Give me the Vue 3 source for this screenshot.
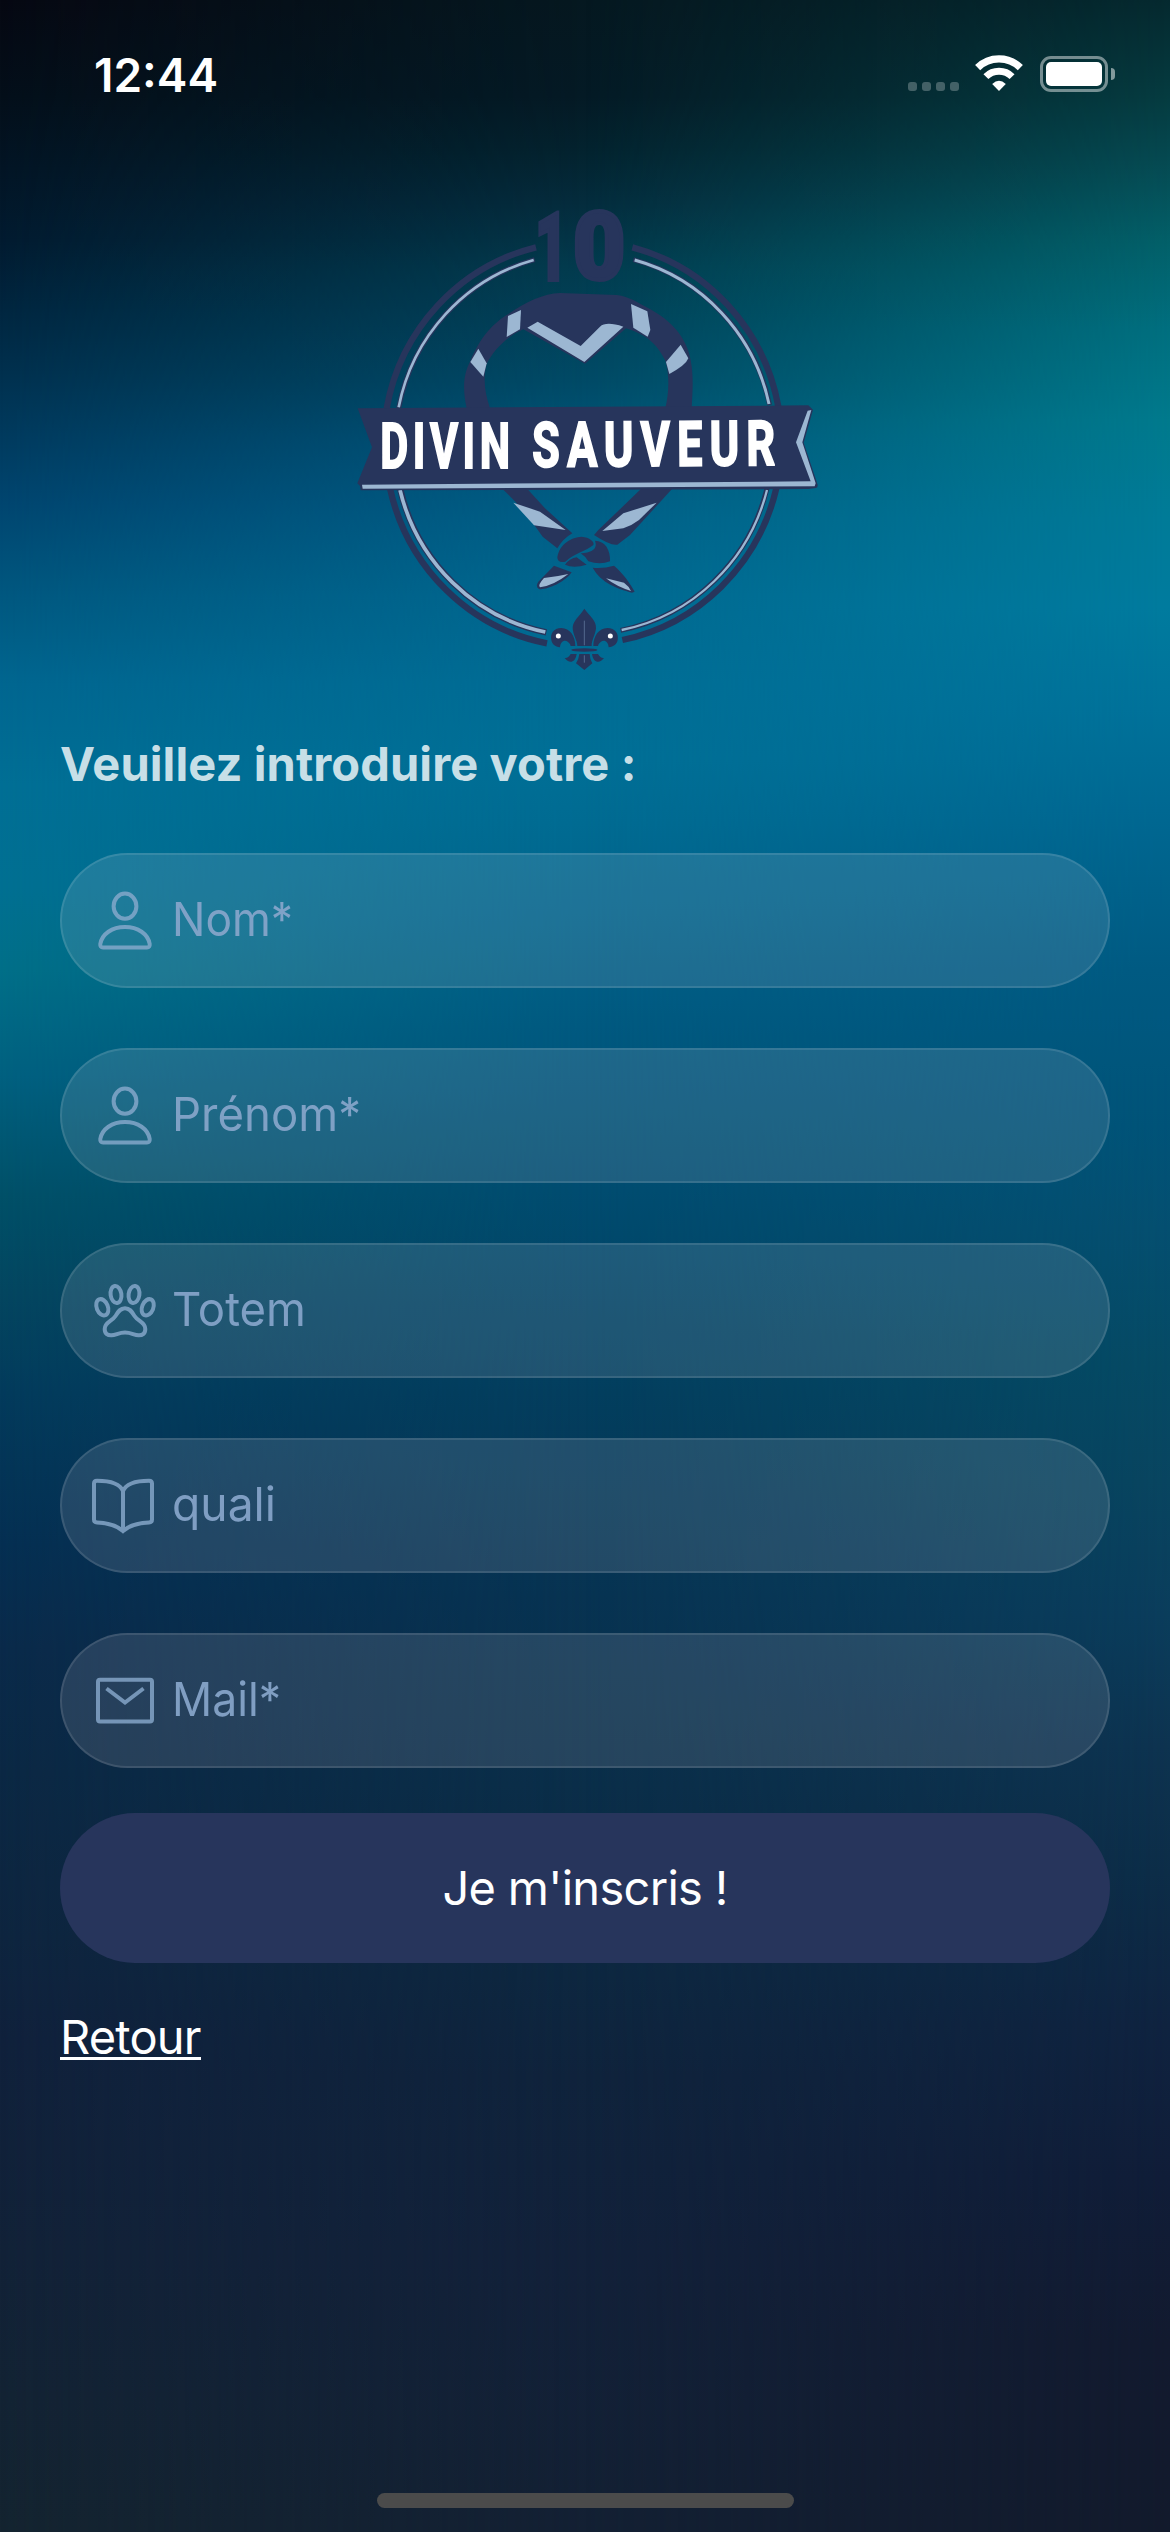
<script setup>
const fields = [
  { icon: 'person', label: 'Nom*', width: 121 },
  { icon: 'person', label: 'Prénom*', width: 189 },
  { icon: 'paw', label: 'Totem', width: 134 },
  { icon: 'book', label: 'quali', width: 104 },
  { icon: 'mail', label: 'Mail*', width: 109 },
]
</script>

<template>
  <main class="screen">
    <div class="tint tint-mid"></div>
    <div class="tint tint-right"></div>

    <header class="status">
      <span class="time">12:44</span>
      <div class="indicators">
        <div class="signal"><i></i><i></i><i></i><i></i></div>
        <svg class="wifi" viewBox="0 0 145 108">
          <g fill="none" stroke="#fff">
            <path d="M8 38A92 92 0 0 1 137 38" stroke-width="22" />
            <path d="M33 65A56 56 0 0 1 112 65" stroke-width="21" />
          </g>
          <path d="M72.500 108L52 87Q72.500 68 93 87Z" fill="#fff" />
        </svg>
        <div class="battery"><div class="charge"></div></div>
        <div class="nub"></div>
      </div>
    </header>

    <svg class="logo" viewBox="0 0 1470 1500">
      <g fill="none" stroke="#27355c" stroke-width="19">
        <path d="M588 172A600 609 0 0 0 140 655" />
        <path d="M877 172A600 609 0 0 1 1315 650" />
        <path d="M150 895A600 609 0 0 0 621 1360" />
        <path d="M1309 895A600 609 0 0 1 847 1350" />
      </g>
      <g fill="none" stroke="#27355c" stroke-width="15">
        <path d="M584 209A565 574 0 0 0 176 655" />
        <path d="M880 209A565 574 0 0 1 1289 645" />
        <path d="M180 895A565 574 0 0 0 619 1327" stroke-width="19" />
        <path d="M1281 895A565 574 0 0 1 842 1321" />
      </g>
      <g fill="none" stroke="#9cb7d2" stroke-width="8">
        <path d="M581 210A565 574 0 0 0 176 652" />
        <path d="M884 210A565 574 0 0 1 1287 642" stroke-width="9" />
        <path d="M180 900A565 574 0 0 0 616 1326" stroke-width="11" />
        <path d="M1281 900A565 574 0 0 1 845 1320" stroke-width="7" />
      </g>

      <g class="ten" fill="#27355c" stroke="#27355c" stroke-width="12">
        <text transform="translate(585 270) scale(.6 1)">1</text>
        <text transform="translate(699 268) scale(.96 1)">0</text>
      </g>

      <path fill="#27355c" d="M380 655C366 590 372 550 390 515C420 440 465 395 505 372C560 335 610 311 660 309L830 315C870 320 890 337 930 357C990 390 1040 440 1052 510C1061 560 1058 600 1055 655H976C986 610 990 560 976 512C950 460 920 435 858 415L735 521L550 418C500 440 460 480 440 522C428 570 435 610 450 655Z" />
      <g fill="#9cb7d2">
        <path d="M504 378L543 360L540 418L500 441Z" />
        <path d="M415 476L440 520L430 560L391 516Z" />
        <path d="M873 342L922 364L931 420L923 440L880 413Z" />
        <path d="M1022 464L1045 505Q1038 525 988 552L978 516Z" />
        <path d="M562 413L593 395L722 468L780 410Q798 393 850 410L733 516Z" />
      </g>

      <path fill="#27355c" d="M485 895H560L615 955L697 1030Q670 1045 652 1075L608 1040C580 1000 540 945 485 895Z" />
      <path fill="#27355c" d="M905 895H998L870 1035L832 1064Q812 1068 762 1035L775 1020Z" />
      <g fill="#9cb7d2">
        <path d="M520 938L600 965L677 1020L582 1006Z" />
        <path d="M950 938L850 970L787 1023L850 1015Q875 1007 897 990Z" />
      </g>

      <g fill="#27355c">
        <path d="M652 1102C658 1062 695 1041 725 1040C748 1042 765 1055 760 1065C740 1082 700 1092 676 1115Q652 1120 652 1102Z" />
        <path d="M765 1052C795 1052 812 1080 810 1114Q780 1126 745 1114Q735 1098 722 1090C750 1088 775 1080 765 1052Z" />
        <path d="M675 1124Q690 1104 710 1102L740 1124Q700 1136 675 1124Z" />
        <path d="M642 1127L695 1147C675 1178 615 1202 597 1197Q585 1190 595 1175Z" />
        <path d="M758 1133Q790 1136 822 1127C850 1150 870 1180 884 1205L876 1208C830 1195 785 1180 758 1133Z" />
      </g>
      <g fill="#9cb7d2">
        <path d="M612 1164Q650 1160 685 1152Q640 1187 600 1192Q592 1186 612 1164Z" />
        <path d="M798 1165L852 1178Q866 1188 873 1203Q830 1190 798 1165Z" />
      </g>

      <path fill="#27355c" d="M53 655L1405 646L1419 659L1391 758L1433 884Q1434 892 1428 894L1405 897L62 901L60 888L52 880L96 772Z" />
      <path fill="#9cb7d2" d="M66 884L620 880L1412 874L1368 757L1403 662L1414 660L1387 757L1427 880L1424 889L68 896Z" />
      <g class="banner-text" fill="#fff" stroke="#fff" stroke-width="6">
        <text transform="translate(121 834) scale(.69 1)" textLength="564">DIVIN</text>
        <text transform="translate(577 830) rotate(-.4) scale(.72 1)" textLength="1012">SAUVEUR</text>
      </g>

      <g fill="#27355c">
        <path d="M733 1256C750 1280 769 1290 768 1315C766 1335 755 1350 755 1368H712C712 1350 698 1335 698 1312C700 1290 718 1280 733 1256Z" />
        <path d="M706 1368C706 1338 690 1315 664 1314C640 1314 630 1332 634 1350C636 1362 645 1370 660 1372C661 1354 674 1347 684 1356Q692 1362 692 1368Z" />
        <path d="M760 1368C760 1338 776 1315 802 1314C826 1314 837 1332 833 1350C831 1362 821 1370 806 1372C805 1354 792 1347 782 1356Q774 1362 774 1368Z" />
        <ellipse cx="733" cy="1380" rx="39" ry="5" />
        <path d="M718 1392H749Q750 1410 757 1420L733 1440L708 1420Q716 1410 718 1392Z" />
        <path d="M710 1392C706 1420 686 1421 674 1404Q684 1406 692 1392Z" />
        <path d="M756 1392C760 1420 780 1421 792 1404Q782 1406 774 1392Z" />
      </g>
      <path d="M733 1292V1366M733 1396V1418" stroke="#5c7399" stroke-width="2.500" />
      <circle cx="655" cy="1338" r="7.500" fill="#fff" />
      <circle cx="811" cy="1338" r="7.500" fill="#fff" />
    </svg>

    <form class="form">
      <h1 class="title">Veuillez introduire votre :</h1>
      <div class="fields">
        <label v-for="field in fields" :key="field.label" class="field">
          <svg class="icon" viewBox="0 0 70 70">
            <template v-if="field.icon === 'person'">
              <ellipse cx="35" cy="20.200" rx="11.400" ry="12.600" />
              <path d="M10.300 58C12 48 22 41 35 41S58 48 59.700 58Q60 61.500 57 61.500H13Q10 61.500 10.300 58Z" />
            </template>
            <template v-else-if="field.icon === 'paw'">
              <ellipse cx="26" cy="18.500" rx="5.400" ry="8.600" transform="rotate(-8 26 18.500)" />
              <ellipse cx="44" cy="18.500" rx="5.400" ry="8.600" transform="rotate(8 44 18.500)" />
              <ellipse cx="12.300" cy="31.300" rx="5.600" ry="8.500" transform="rotate(-22 12.300 31.300)" />
              <ellipse cx="57.700" cy="31.300" rx="5.600" ry="8.500" transform="rotate(22 57.700 31.300)" />
              <path d="M35 32.200C40 32.200 42 36 44.500 40C48 45.500 55.300 46 55.300 53C55.300 58 52 59.500 48.500 59.300C44 59 41 56.500 35 56.500S26 59 21.500 59.300C18 59.500 14.700 58 14.700 53C14.700 46 22 45.500 25.500 40C28 36 30 32.200 35 32.200Z" />
            </template>
            <template v-else-if="field.icon === 'book'">
              <path d="M33 60C27 54.500 18 52 7 51.500Q4 51.300 4 48.500V12.500Q4 9.700 7 9.700C20 9.700 30 13 33 20C36 13 46 9.700 59 9.700Q62 9.700 62 12.500V48.500Q62 51.300 59 51.500C48 52 39 54.500 33 60ZM33 20V60" />
            </template>
            <template v-else>
              <rect x="8" y="13.800" width="54" height="41.700" rx="2" />
              <path d="M16.500 22.500L35 36.500L53.500 22.500" />
            </template>
          </svg>
          <svg class="placeholder" viewBox="0 0 300 70">
            <text x="0" y="50" :textLength="field.width" lengthAdjust="spacingAndGlyphs">{{ field.label }}</text>
          </svg>
        </label>
      </div>
      <button type="button" class="submit">Je m'inscris !</button>
      <a class="back">Retour</a>
    </form>

    <div class="home"></div>
  </main>
</template>

<style>
body {
  margin: 0;
  background: #132033;
}
</style>

<style scoped>
.screen {
  position: relative;
  box-sizing: border-box;
  display: flex;
  flex-direction: column;
  width: 1170px;
  height: 2532px;
  overflow: hidden;
  font-family: Inter, "Liberation Sans", sans-serif;
  color: #fff;
  background: linear-gradient(180deg, #060812 0%, #040f1a 3.8%, #021b30 9.5%, #00304e 14.7%, #00456f 19.8%, #005880 23.6%, #006690 27%, #006f95 31%, #007092 35%, #006f88 38.3%, #006080 42.5%, #005068 47.2%, #044660 51%, #033b5c 55%, #052f52 61%, #0a2a4a 65%, #0b2844 70%, #0e253f 76.5%, #10213c 80.5%, #122238 89%, #142430 100%);
}

.tint {
  position: absolute;
  inset: 0;
}

.tint-mid {
  background: linear-gradient(180deg, #051820 0%, #041a25 3.8%, #03232f 6%, #042c3d 8%, #023b4e 10.500%, #004a66 15%, #00567a 17.500%, #006088 20.500%, #006890 23.500%, #006d95 27%, #006f96 30%, #006b92 32.500%, #00628a 36.500%, #005980 40.500%, #004c70 47%, #033e5e 55%, #073352 63%, #0a2e49 70.500%, #0d2740 78%, #0f233c 82%, #12213a 89%, #132033 100%);
  -webkit-mask-image: linear-gradient(90deg, transparent, #000 50%);
  mask-image: linear-gradient(90deg, transparent, #000 50%);
}

.tint-right {
  background: linear-gradient(180deg, #05292f 0%, #053b40 3.8%, #054a52 6.400%, #026069 9.600%, #006f7f 13%, #007a8d 16.600%, #007b98 20.500%, #007b9e 24%, #00729a 28%, #006892 32%, #005a82 38.300%, #005378 44.500%, #044f70 48.500%, #054a64 54%, #084560 58.500%, #0a3d5c 63.800%, #0d3350 69%, #0c2d48 74%, #0f2340 80%, #101d38 86%, #121a2f 92.500%, #121a2c 100%);
  -webkit-mask-image: linear-gradient(90deg, transparent 50%, #000 100%);
  mask-image: linear-gradient(90deg, transparent 50%, #000 100%);
}

.status,
.logo,
.form,
.home {
  position: relative;
}

.status {
  box-sizing: border-box;
  display: flex;
  justify-content: space-between;
  align-items: flex-start;
  height: 190px;
  padding: 55px 55px 0 94px;
}

.time {
  font-size: 46px;
  font-weight: 600;
  line-height: 40px;
}

.indicators {
  display: flex;
  align-items: flex-start;
}

.signal {
  display: flex;
  gap: 5px;
  margin: 27px 16px 0 0;
}

.signal i {
  width: 9px;
  height: 9px;
  border-radius: 3px;
  background: rgba(255, 255, 255, 0.25);
}

.wifi {
  width: 48px;
  height: 36px;
  margin-right: 17px;
}

.battery {
  box-sizing: border-box;
  width: 68px;
  height: 36px;
  margin-top: 1px;
  padding: 3px;
  border: 3px solid rgba(255, 255, 255, 0.45);
  border-radius: 11px;
}

.charge {
  height: 24px;
  border-radius: 5px;
  background: #fff;
}

.nub {
  width: 4px;
  height: 12px;
  margin: 13px 0 0 3px;
  border-radius: 0 4px 4px 0;
  background: rgba(255, 255, 255, 0.5);
}

.logo {
  display: block;
  width: 490px;
  height: 500px;
  margin-left: 340px;
  overflow: visible;
}

.ten {
  font: 900 282px Roboto, sans-serif;
}

.banner-text {
  font: 700 187px Roboto, sans-serif;
}

.form {
  display: flex;
  flex-direction: column;
  padding: 0 60px;
}

.title {
  margin: 43px 0 60px;
  font-size: 47px;
  font-weight: 700;
  line-height: 61px;
  height: 60px;
  letter-spacing: 0.1px;
  color: rgba(255, 255, 255, 0.8);
  white-space: nowrap;
}

.fields {
  display: flex;
  flex-direction: column;
  gap: 60px;
}

.field {
  box-sizing: border-box;
  display: flex;
  align-items: center;
  height: 135px;
  padding-left: 28px;
  border: 2px solid rgba(255, 255, 255, 0.11);
  border-radius: 68px;
  background: rgba(245, 230, 235, 0.12);
}

.icon {
  width: 70px;
  height: 70px;
  margin-right: 12px;
  fill: none;
  stroke: #8aabce;
  stroke-width: 4;
  opacity: 0.8;
}

.placeholder {
  width: 300px;
  height: 70px;
  fill: #88a6cb;
  font-size: 47px;
  opacity: 0.92;
}

.submit {
  height: 150px;
  margin: 45px 0 0;
  padding: 0;
  border: 0;
  border-radius: 75px;
  background: #27355c;
  color: #fff;
  font: 400 47px/150px Inter, sans-serif;
  letter-spacing: -0.7px;
}

.back {
  align-self: flex-start;
  margin-top: 45px;
  border-bottom: 3px solid #fff;
  font-size: 47px;
  line-height: 58px;
  height: 49px;
  letter-spacing: -0.8px;
}

.home {
  width: 417px;
  height: 15px;
  margin: auto 0 24px 377px;
  border-radius: 8px;
  background: #4b4b4b;
}
</style>
